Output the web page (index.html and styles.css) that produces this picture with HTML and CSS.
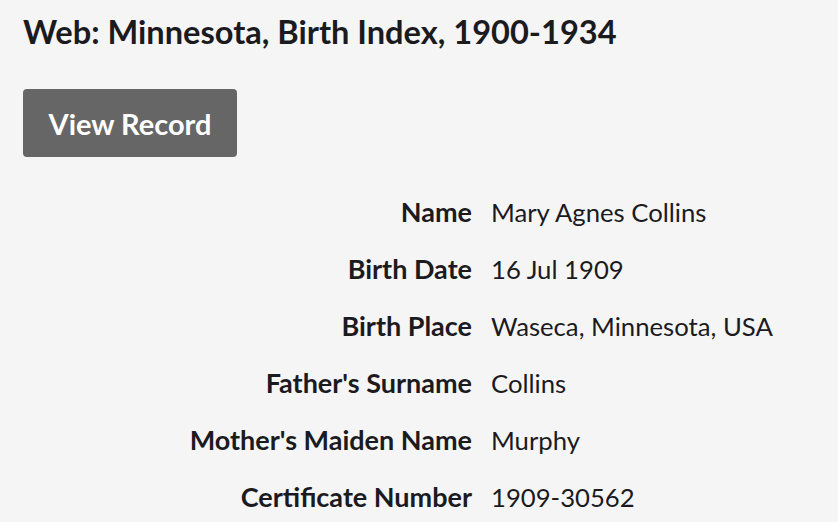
FILE: index.html
```html
<!DOCTYPE html>
<html lang="en">
<head>
<meta charset="utf-8">
<title>Web: Minnesota, Birth Index, 1900-1934</title>
<link rel="stylesheet" href="styles.css">
</head>
<body>
<main class="record">
  <h1 class="title">Web: Minnesota, Birth Index, 1900-1934</h1>
  <a class="btn" href="#">View Record</a>
  <dl class="facts">
    <dt>Name</dt><dd>Mary Agnes Collins</dd>
    <dt>Birth Date</dt><dd>16 Jul 1909</dd>
    <dt>Birth Place</dt><dd>Waseca, Minnesota, USA</dd>
    <dt>Father's Surname</dt><dd>Collins</dd>
    <dt>Mother's Maiden Name</dt><dd>Murphy</dd>
    <dt>Certificate Number</dt><dd>1909-30562</dd>
  </dl>
</main>
</body>
</html>
```
FILE: styles.css
```css
html, body {
  margin: 0;
  background: #f5f5f5;
}
body {
  font-family: "Lato", "Open Sans", sans-serif;
  color: #1b1b1f;
}
.record {
  padding: 13px 23px 0 23px;
  display: flex;
  flex-direction: column;
  align-items: flex-start;
}
.title {
  margin: 0;
  font-size: 32.6px;
  line-height: 38px;
  font-weight: 700;
}
.btn {
  margin-top: 38px;
  display: flex;
  align-items: center;
  justify-content: center;
  width: 214px;
  height: 68px;
  box-sizing: border-box;
  background: #666666;
  color: #ffffff;
  border-radius: 4px;
  text-decoration: none;
  font-size: 29px;
  font-weight: 700;
}
.facts {
  margin: 26px 0 0 0;
  display: grid;
  grid-template-columns: 449px auto;
  grid-auto-rows: 57px;
  column-gap: 19px;
  align-items: center;
}
.facts dt {
  font-size: 27px;
  font-weight: 700;
  text-align: right;
}
.facts dd {
  margin: 0;
  font-size: 25.7px;
  font-weight: 400;
}
```
